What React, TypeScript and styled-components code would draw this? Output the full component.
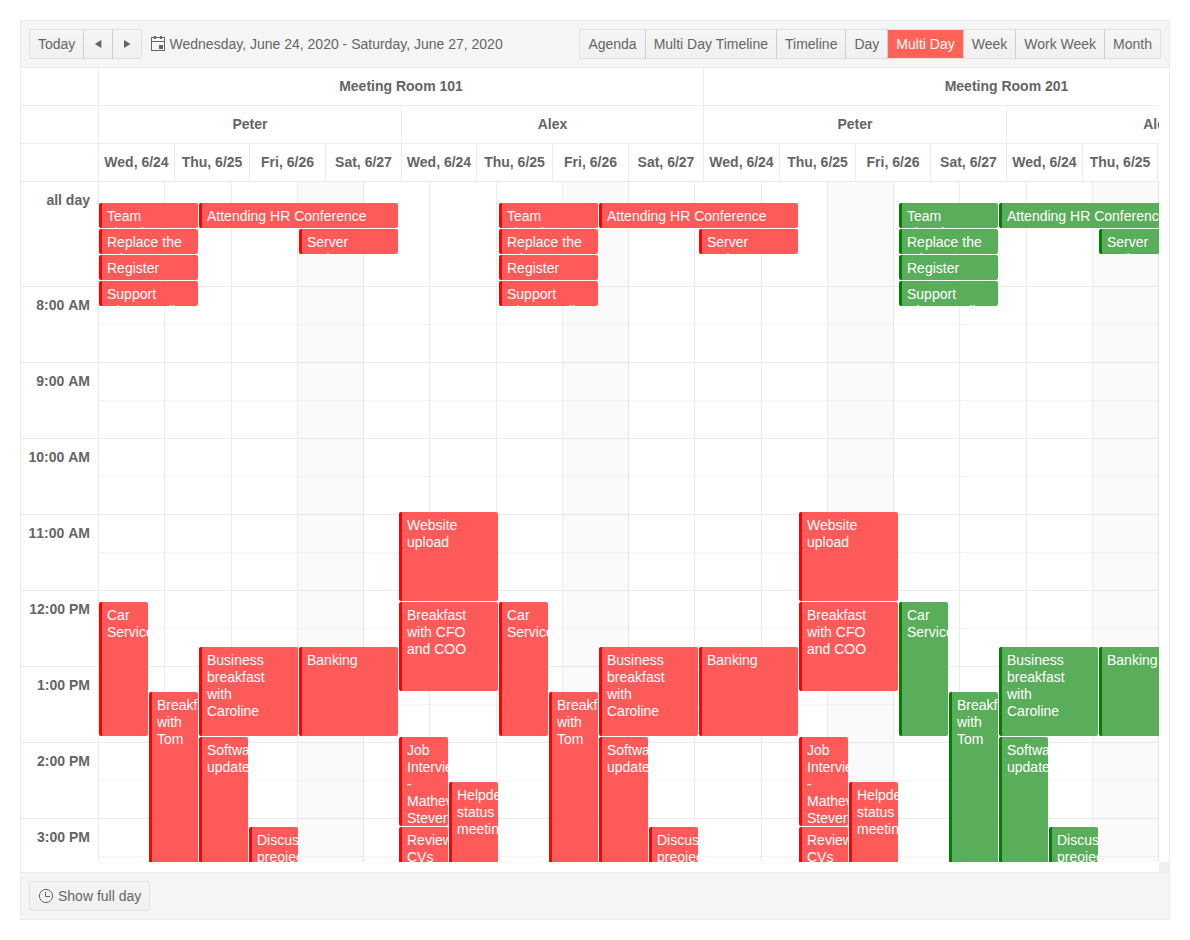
import React from "react";
import styled, { createGlobalStyle, css } from "styled-components";

const LINE = "rgba(0, 0, 0, 0.08)";

const GlobalStyle = createGlobalStyle`
  *, *::before, *::after { box-sizing: border-box; }
  body {
    margin: 0;
    padding: 20px;
    background: #fff;
    color: #656565;
    font: 14px/20px "Liberation Sans", Arial, sans-serif;
  }
`;

const Scheduler = styled.div`
  display: flex;
  flex-direction: column;
  width: 1150px;
  height: 900px;
  border: 1px solid #ebebeb;
  background: #fff;
`;

const Toolbar = styled.header`
  display: flex;
  align-items: center;
  flex: none;
  gap: 8px;
  height: 47px;
  padding: 0 8px;
  background: #f5f5f5;
  border-bottom: 1px solid #ebebeb;
`;

const Footer = styled(Toolbar).attrs({ as: "footer" })`
  border-top: 1px solid #ebebeb;
  border-bottom: 0;
`;

const ButtonGroup = styled.div`
  display: flex;
`;

const Button = styled.button<{ $active?: boolean; $icon?: boolean }>`
  display: flex;
  align-items: center;
  justify-content: center;
  gap: 4px;
  height: 30px;
  padding: 0 ${(p) => (p.$icon ? 6 : 8)}px;
  border: 1px solid ${LINE};
  background: #f5f5f5 linear-gradient(rgba(0, 0, 0, 0), rgba(0, 0, 0, 0.02));
  background-clip: padding-box;
  color: inherit;
  font: inherit;
  white-space: nowrap;

  & + & { margin-left: -1px; }
  &:first-child { border-radius: 2px 0 0 2px; }
  &:last-child { border-radius: 0 2px 2px 0; }
  &:only-child { border-radius: 2px; }

  ${(p) =>
    p.$active &&
    css`
      background: #ff6358;
      background-clip: padding-box;
      color: #fff;
    `}
`;

const DateRange = styled.div`
  display: flex;
  align-items: center;
  gap: 3.2px;
  flex: 1;
`;

const Icon = styled.svg`
  display: block;
  width: 16px;
  height: 16px;
  flex: none;
`;

const Viewport = styled.div`
  flex: 1;
  min-height: 0;
  display: grid;
  grid-template: minmax(0, 1fr) 10px / 1138px 10px;
`;

const Scroller = styled.main`
  display: flex;
  flex-direction: column;
  overflow: hidden;
`;

const ScrollCorner = styled.div`
  grid-area: 2 / 2;
  background: #efefef;
`;

const HeaderRow = styled.div`
  display: flex;
  height: 38px;
  flex: none;
`;

const HeaderCell = styled.div<{ $w: number; $first?: boolean }>`
  flex: none;
  width: ${(p) => p.$w}px;
  padding: 8px 0;
  border-left: ${(p) => (p.$first ? 0 : 1)}px solid #ebebeb;
  border-bottom: 1px solid #ebebeb;
  text-align: center;
  font-weight: 700;
  white-space: nowrap;
`;

const Body = styled.div`
  display: flex;
  flex: 1;
  min-height: 0;
`;

const TimeColumn = styled.div`
  flex: none;
  width: 78px;
  border-right: 1px solid #ebebeb;
`;

const TimeLabel = styled.div<{ $h: number }>`
  height: ${(p) => p.$h}px;
  padding: 8px 8px 0 0;
  border-bottom: 1px solid #ebebeb;
  text-align: right;
  font-weight: 700;
  font-kerning: none;
`;

const Canvas = styled.div`
  position: relative;
  flex: none;
  display: flex;
`;

const DayColumn = styled.div<{ $w: number; $off: boolean }>`
  flex: none;
  width: ${(p) => p.$w}px;
  background: ${(p) => (p.$off ? "#fafafa" : "#fff")};
  border-right: 1px solid ${LINE};
`;

const Slot = styled.div<{ $h: number; $half?: boolean }>`
  height: ${(p) => p.$h}px;
  border-bottom: 1px ${(p) => (p.$half ? "dotted" : "solid")} ${LINE};
`;

const Event = styled.div<{ $x: number; $y: number; $w: number; $h: number; $green?: boolean }>`
  position: absolute;
  left: ${(p) => p.$x}px;
  top: ${(p) => p.$y}px;
  width: ${(p) => p.$w}px;
  height: ${(p) => p.$h}px;
  padding: 5px 14px 0 5px;
  overflow: hidden;
  border-left: 3px solid ${(p) => (p.$green ? "#008000" : "#ff0000")};
  border-radius: 2px;
  background: ${(p) => (p.$green ? "#5aad5a" : "#ff5a5a")};
  color: #fff;
  line-height: 17px;
`;

const headerWidths = [76, 75, 76, 76, 75, 76, 76, 75, 76, 76, 75, 76, 76, 75, 76, 76];
const personWidths = [303, 302, 303, 303];
const days = ["Wed, 6/24", "Thu, 6/25", "Fri, 6/26", "Sat, 6/27"];
const slotWidths = [66, 67, 66, 66];
const views = ["Agenda", "Multi Day Timeline", "Timeline", "Day", "Multi Day", "Week", "Work Week", "Month"];
const hours = ["8:00 AM", "9:00 AM", "10:00 AM", "11:00 AM", "12:00 PM", "1:00 PM", "2:00 PM", "3:00 PM"];

type Item = [title: string, x: number, y: number, w: number, h: number];

const items: Item[] = [
  ["Team planning meeting", 0, 21, 99, 25],
  ["Attending HR Conference", 100, 21, 199, 25],
  ["Replace the printer on the 1st floor", 0, 47, 99, 25],
  ["Server maintenance", 200, 47, 99, 25],
  ["Register new access point", 0, 73, 99, 25],
  ["Support Phone Call", 0, 99, 99, 25],
  ["Car Service", 0, 420, 49, 134],
  ["Breakfast with Tom", 50, 510, 49, 224],
  ["Business breakfast with Caroline", 100, 465, 99, 89],
  ["Software updates", 100, 555, 49, 179],
  ["Discuss preojects", 150, 645, 49, 134],
  ["Banking", 200, 465, 99, 89],
  ["Website upload", 300, 330, 99, 89],
  ["Breakfast with CFO and COO", 300, 420, 99, 89],
  ["Job Interview - Mathew Stevens", 300, 555, 49, 89],
  ["Helpdesk status meeting", 350, 600, 49, 134],
  ["Review CVs", 300, 645, 49, 89],
];

const CalendarIcon = () => (
  <Icon viewBox="0 0 16 16" fill="none" stroke="currentColor">
    <rect x="1.5" y="1.5" width="13" height="13" />
    <path d="M1 5.5h14" />
    <path d="M4 0h2v3H4zM10 0h2v3h-2zM9 9h4v4H9z" fill="currentColor" stroke="none" />
  </Icon>
);

const ClockIcon = () => (
  <Icon viewBox="0 0 16 16" fill="none" stroke="currentColor">
    <circle cx="8" cy="8" r="6.6" />
    <path d="M7.5 4v4.5H12" />
  </Icon>
);

const Arrow = ({ d }: { d: string }) => (
  <Icon viewBox="0 0 16 16" fill="currentColor">
    <path d={d} />
  </Icon>
);

export default function App() {
  return (
    <>
      <GlobalStyle />
      <Scheduler>
        <Toolbar>
          <ButtonGroup>
            <Button>Today</Button>
            <Button $icon aria-label="Previous"><Arrow d="M11.3 4v8l-6.5-4z" /></Button>
            <Button $icon aria-label="Next"><Arrow d="M5 4v8l6.5-4z" /></Button>
          </ButtonGroup>
          <DateRange>
            <CalendarIcon />
            <span>Wednesday, June 24, 2020 - Saturday, June 27, 2020</span>
          </DateRange>
          <ButtonGroup>
            {views.map((v) => (
              <Button key={v} $active={v === "Multi Day"}>{v}</Button>
            ))}
          </ButtonGroup>
        </Toolbar>
        <Viewport>
          <Scroller>
            <HeaderRow>
              <HeaderCell $w={77} $first />
              <HeaderCell $w={605}>Meeting Room 101</HeaderCell>
              <HeaderCell $w={606}>Meeting Room 201</HeaderCell>
            </HeaderRow>
            <HeaderRow>
              <HeaderCell $w={77} $first />
              {personWidths.map((w, i) => (
                <HeaderCell key={i} $w={w}>{i % 2 ? "Alex" : "Peter"}</HeaderCell>
              ))}
            </HeaderRow>
            <HeaderRow>
              <HeaderCell $w={77} $first />
              {headerWidths.map((w, i) => (
                <HeaderCell key={i} $w={w}>{days[i % 4]}</HeaderCell>
              ))}
            </HeaderRow>
            <Body>
              <TimeColumn>
                <TimeLabel $h={105}>all day</TimeLabel>
                {hours.map((h) => (
                  <TimeLabel key={h} $h={76}>{h}</TimeLabel>
                ))}
              </TimeColumn>
              <Canvas>
                {Array.from({ length: 16 }, (_, i) => (
                  <DayColumn key={i} $w={slotWidths[i % 4]} $off={i % 4 === 3}>
                    <Slot $h={105} />
                    {hours.map((h) => (
                      <React.Fragment key={h}>
                        <Slot $h={38} $half />
                        <Slot $h={38} />
                      </React.Fragment>
                    ))}
                  </DayColumn>
                ))}
                {[0, 1, 2].map((g) =>
                  items.map(([title, x, y, w, h]) => (
                    <Event key={g + title} $x={g * 400 + x} $y={y} $w={w} $h={h} $green={g === 2}>
                      {title}
                    </Event>
                  ))
                )}
              </Canvas>
            </Body>
          </Scroller>
          <ScrollCorner />
        </Viewport>
        <Footer>
          <Button><ClockIcon />Show full day</Button>
        </Footer>
      </Scheduler>
    </>
  );
}
